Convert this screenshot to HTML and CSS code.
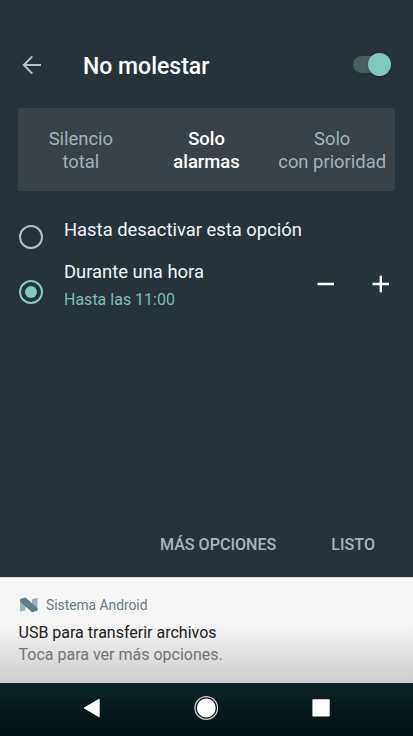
FILE: index.html
```html
<!DOCTYPE html>
<html lang="es">
<head>
<meta charset="utf-8">
<title>No molestar</title>
<link rel="stylesheet" href="styles.css">
</head>
<body>
<main class="panel">
  <header class="header">
    <svg class="back" width="20" height="20" viewBox="0 0 20 20"><path d="M19 10H2M10.3 1.4 1.8 10l8.5 8.6"/></svg>
    <h1 class="title"><span>No molestar</span></h1>
    <div class="switch"><div class="thumb"></div></div>
  </header>
  <div class="modes">
    <div class="mode"><span>Silencio<br>total</span></div>
    <div class="mode active"><span>Solo<br>alarmas</span></div>
    <div class="mode"><span>Solo<br>con prioridad</span></div>
  </div>
  <div class="option first">
    <div class="radio"></div>
    <div class="label"><span>Hasta desactivar esta opción</span></div>
  </div>
  <div class="option second">
    <div class="radio checked"></div>
    <div class="text">
      <div class="label"><span>Durante una hora</span></div>
      <div class="sub"><span>Hasta las 11:00</span></div>
    </div>
    <svg class="adjust" width="73" height="18" viewBox="0 0 73 18"><path d="M0.5 9H17M55.5 9H72M63.8 0.8V17.2"/></svg>
  </div>
  <footer class="actions">
    <span class="more">MÁS OPCIONES</span>
    <span class="done">LISTO</span>
  </footer>
</main>
<section class="notification">
  <div class="app">
    <svg width="18" height="16" viewBox="0 0 18 16"><path fill="#9fb0b7" d="M0 2 5.5 1v12.4L0 14.4zM12 2.3 17.5.8v12.7L12 15z"/><path fill="#5f7e8b" d="M0 2 5.5.6 17.5 11.2v2.4L12 15.2 0 4.4z"/></svg>
    <span class="app-name">Sistema Android</span>
  </div>
  <div class="headline"><span>USB para transferir archivos</span></div>
  <div class="detail"><span>Toca para ver más opciones.</span></div>
</section>
<nav class="navbar">
  <svg width="18" height="20" viewBox="0 0 18 20"><path fill="#fff" stroke="#fff" stroke-width="1.4" stroke-linejoin="round" d="M2.5 10 17 1.5v17z"/></svg>
  <svg width="24" height="24" viewBox="0 0 24 24"><circle cx="12.3" cy="12" r="11.3" fill="none" stroke="#cbd1d1" stroke-width="1.3"/><circle cx="12.3" cy="12" r="9.4" fill="#fff"/></svg>
  <svg width="18" height="18" viewBox="0 0 18 18"><rect x=".4" y=".2" width="17.3" height="17.3" rx="1" fill="#fff"/></svg>
</nav>
</body>
</html>
```
FILE: styles.css
```css
* { box-sizing: border-box; }
body {
  margin: 0;
  width: 413px;
  height: 736px;
  display: flex;
  flex-direction: column;
  overflow: hidden;
  font-family: Roboto, sans-serif;
  background: #27333b;
}
svg { display: block; flex: none; }
.panel {
  height: 577px;
  padding: 41px 18px 0;
  display: flex;
  flex-direction: column;
  background: #27333b;
}
.header { height: 48px; display: flex; align-items: center; padding: 0 4px 0 4px; }
.back { fill: none; stroke: #bbbec2; stroke-width: 2; margin-top: -1px; }
.title { margin: 4px 0 0 41px; flex: 1; font-size: 23px; line-height: 30px; font-weight: 500; color: #fff; }
.switch {
  width: 38px;
  height: 17px;
  margin-top: -1px;
  border-radius: 9px;
  background: #45605f;
  display: flex;
  justify-content: flex-end;
  align-items: center;
}
.thumb { width: 23px; height: 23px; flex: none; border-radius: 50%; background: #80c7bf; box-shadow: 0 1px 2px #0006; }
.modes {
  height: 83px;
  margin: 19px 0 0;
  display: grid;
  grid-template-columns: repeat(3, 1fr);
  align-items: center;
  border-radius: 2px;
  background: #394248;
}
.mode { text-align: center; font-size: 18.4px; line-height: 23px; color: #a3b1b9; white-space: nowrap; }
.active { color: #fff; font-weight: 500; }
.option { display: flex; }
.first { margin-top: 27px; height: 42px; }
.second { height: 58px; }
.radio { width: 24px; height: 24px; margin: 7px 21px 0 1px; flex: none; border: 2px solid #b8bdc2; border-radius: 50%; }
.checked { margin-top: 20px; border-color: #80cbc4; display: grid; place-items: center; }
.checked::after { content: ""; width: 12px; height: 12px; border-radius: 50%; background: #80cbc4; }
.text { flex: 1; }
.label { font-size: 18.4px; line-height: 24px; color: #f2f4f5; white-space: nowrap; }
.sub { margin-top: 5px; font-size: 16px; line-height: 21px; color: #78bdb7; }
.adjust { margin: 15px 5px 0 0; fill: none; stroke: #fff; stroke-width: 2.4; }
.actions {
  margin: auto 20px 22px 0;
  display: flex;
  justify-content: flex-end;
  gap: 55px;
  font-size: 16.1px;
  line-height: 20px;
  font-weight: 500;
  color: #a7b4bc;
}
.notification {
  height: 106px;
  padding: 18px 18px 0;
  background: linear-gradient(#f6f6f6 0, #f5f5f5 45%, #cccccc 100%);
  border-top: 1px solid #d5d8da;
}
.app { height: 18px; display: flex; align-items: center; gap: 8px; padding-left: 2px; font-size: 13.8px; color: #607d8b; }
.headline { margin-top: 8px; font-size: 16px; line-height: 22px; color: #212121; padding-left: .5px; }
.detail { font-size: 16px; line-height: 22px; color: #757575; padding-left: .5px; }
.navbar {
  height: 53px;
  padding: 0 83px 3px 82px;
  display: flex;
  align-items: center;
  justify-content: space-between;
  background: linear-gradient(#0b2326, #06181b 55%, #031012);
}
```
